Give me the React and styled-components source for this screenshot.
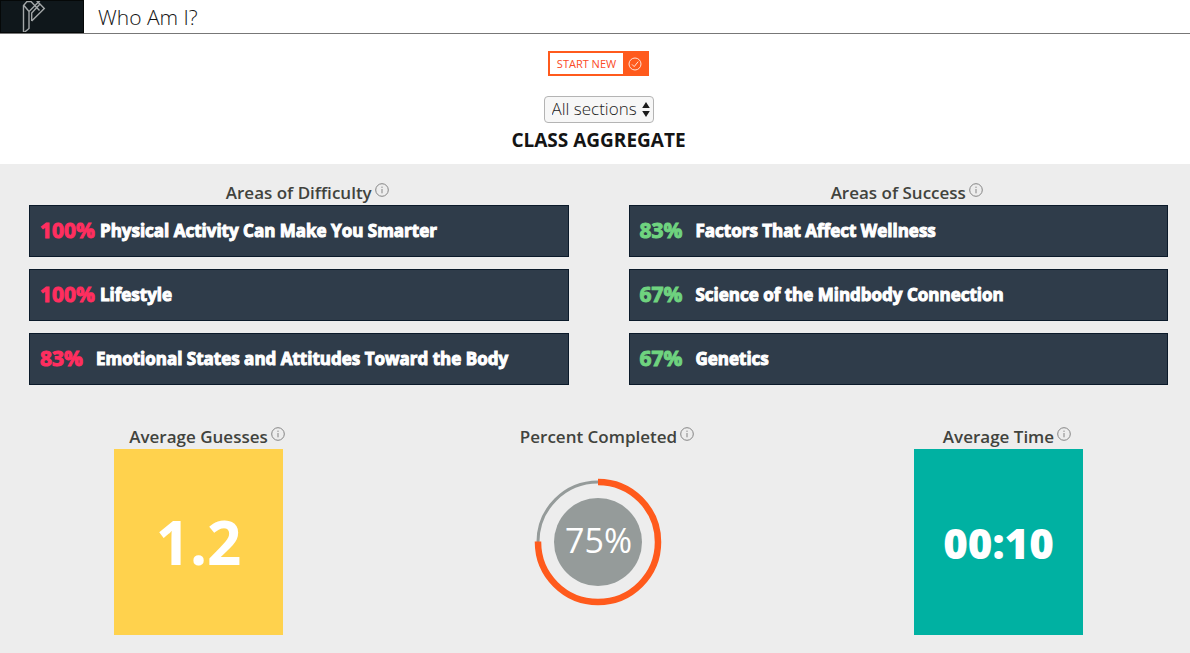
import React from 'react'
import styled, { createGlobalStyle } from 'styled-components'

const GlobalStyle = createGlobalStyle`
  * {
    box-sizing: border-box;
  }
  body {
    margin: 0;
    background: #ededed;
    color: #141414;
    font-family: 'Open Sans', 'Noto Sans', sans-serif;
  }
`

const Header = styled.header`
  display: flex;
  align-items: center;
  height: 34px;
  background: #fff;
  border-bottom: 1px solid #777;
`

const LogoLink = styled.a`
  display: block;
  width: 84px;
  height: 33px;
  margin-right: 14px;
  background: #0f171b;
  border: 1px solid #050808;
  svg {
    display: block;
  }
`

const PageTitle = styled.h1`
  margin: 0;
  font-size: 21px;
  font-weight: 300;
  line-height: 32px;
`

const Toolbar = styled.section`
  display: flex;
  flex-direction: column;
  align-items: center;
  height: 130px;
  padding: 17px 0 0 7px;
  background: #fff;
`

const StartButton = styled.button`
  display: flex;
  align-items: stretch;
  height: 25px;
  padding: 0;
  border: 2px solid #ff5a1c;
  background: #fff;
  color: #fb4a26;
  font-family: inherit;
  font-size: 11px;
  line-height: 21px;
  cursor: pointer;
`

const StartLabel = styled.span`
  padding: 0 7px;
`

const StartIcon = styled.span`
  display: flex;
  align-items: center;
  justify-content: center;
  width: 24px;
  background: #ff5a1c;
`

const SelectWrap = styled.div`
  display: grid;
  align-items: center;
  margin-top: 20px;
  svg {
    grid-area: 1 / 1;
    justify-self: end;
    margin-right: 4px;
    pointer-events: none;
  }
`

const SectionSelect = styled.select`
  grid-area: 1 / 1;
  appearance: none;
  height: 27px;
  padding: 0 15px 2px 7px;
  border: 1px solid #b4b4b4;
  border-radius: 4px;
  background: #f7f7f7;
  color: #222;
  font-family: inherit;
  font-size: 17px;
  font-weight: 300;
`

const SectionTitle = styled.h2`
  margin: 4px 0 0;
  font-size: 19px;
  font-weight: 700;
  line-height: 26px;
`

const Areas = styled.section`
  display: grid;
  grid-template-columns: 1fr 1fr;
  gap: 60px;
  padding: 16px 22px 0 29px;
`

const Column = styled.div`
  display: flex;
  flex-direction: column;
  align-items: center;
`

const Heading = styled.h3`
  display: flex;
  align-items: flex-start;
  margin: 0;
  color: #41433d;
  font-size: 17px;
  font-weight: 600;
  line-height: 25px;
  white-space: nowrap;
`

// pulled out of the width so the heading text itself stays centered
const InfoButton = styled.button`
  display: block;
  width: 14px;
  height: 14px;
  margin: 3px -17px 0 3px;
  padding: 0;
  border: 0;
  background: none;
  color: #858585;
  cursor: pointer;
  svg {
    display: block;
  }
`

const AreaList = styled.ul`
  display: flex;
  flex-direction: column;
  gap: 12px;
  width: 100%;
  margin: 0;
  padding: 0;
  list-style: none;
`

const AreaItem = styled.li`
  display: flex;
  align-items: center;
  gap: ${props => (props.$wide ? '5px' : '13px')};
  height: 52px;
  padding: 0 10px 2px;
  border: 1px solid #0b1a2a;
  background: #2f3c4a;
  color: #fff;
  font-size: 17px;
  font-weight: 700;
  -webkit-text-stroke: 1px;
`

const AreaPercent = styled.span`
  color: ${props => props.$color};
  font-size: 21px;
  line-height: 30px;
`

const Stats = styled.section`
  display: flex;
  justify-content: space-between;
  padding: 39px 107px 18px 114px;
`

const Tile = styled.div`
  display: flex;
  align-items: center;
  justify-content: center;
  width: 169px;
  height: 186px;
  background: ${props => props.$color};
  color: #fff;
  font-size: ${props => props.$size};
  font-weight: ${props => props.$weight};
`

const Gauge = styled.div`
  display: grid;
  place-items: center;
  height: 186px;
  svg,
  span {
    grid-area: 1 / 1;
  }
`

const GaugeValue = styled.span`
  padding-bottom: 4px;
  color: #fff;
  font-size: 34px;
  line-height: 40px;
`

const DIFFICULTY = [
  { percent: 100, name: 'Physical Activity Can Make You Smarter' },
  { percent: 100, name: 'Lifestyle' },
  { percent: 83, name: 'Emotional States and Attitudes Toward the Body' },
]

const SUCCESS = [
  { percent: 83, name: 'Factors That Affect Wellness' },
  { percent: 67, name: 'Science of the Mindbody Connection' },
  { percent: 67, name: 'Genetics' },
]

const Logo = () => (
  <svg width="82" height="31" viewBox="1 1 82 31" fill="none" stroke="#a3a7a8" strokeWidth="1.4">
    <path d="M23.5 33V5.5L27 1.5H31L39.5 10.5M23.5 33L29 28.5V11.5L40 0.5M24 5.5L29 11.5M31.7 21V13L39.5 4.5M31.7 21L44.3 8.5L36 0" />
  </svg>
)

const InfoHeading = ({ children }) => (
  <Heading>
    {children}
    <InfoButton type="button" aria-label={`About ${children}`}>
      <svg width="14" height="14" viewBox="0 0 14 14" fill="none" stroke="currentColor">
        <circle cx="7" cy="7" r="6.3" />
        <path d="M7 6v4.3M7 3.6v1.3" />
      </svg>
    </InfoButton>
  </Heading>
)

const AreaColumn = ({ title, areas, color }) => (
  <Column>
    <InfoHeading>{title}</InfoHeading>
    <AreaList>
      {areas.map(area => (
        <AreaItem key={area.name} $wide={area.percent === 100}>
          <AreaPercent $color={color}>{area.percent}%</AreaPercent>
          {area.name}
        </AreaItem>
      ))}
    </AreaList>
  </Column>
)

const PercentGauge = ({ value }) => {
  const length = 2 * Math.PI * 60
  return (
    <Gauge>
      <svg width="128" height="128" viewBox="0 0 128 128" fill="none">
        <circle cx="64" cy="64" r="60" stroke="#959b9a" strokeWidth="3" />
        <circle
          cx="64"
          cy="64"
          r="60"
          stroke="#ff5a1c"
          strokeWidth="6.5"
          strokeDasharray={`${(length * value) / 100} ${length}`}
          transform="rotate(-90 64 64)"
        />
        <circle cx="64" cy="64" r="44" fill="#959b9a" />
      </svg>
      <GaugeValue>{value}%</GaugeValue>
    </Gauge>
  )
}

const App = () => (
  <>
    <GlobalStyle />
    <Header>
      <LogoLink href="#" aria-label="Home">
        <Logo />
      </LogoLink>
      <PageTitle>Who Am I?</PageTitle>
    </Header>
    <main>
      <Toolbar>
        <StartButton type="button">
          <StartLabel>START NEW</StartLabel>
          <StartIcon>
            <svg width="14" height="14" viewBox="0 0 14 14" fill="none" stroke="#ffe3d6">
              <circle cx="7" cy="7" r="6" />
              <path d="M4 7.4l2.2 2.2L10.2 4.6" />
            </svg>
          </StartIcon>
        </StartButton>
        <SelectWrap>
          <SectionSelect aria-label="Section" defaultValue="all">
            <option value="all">All sections</option>
          </SectionSelect>
          <svg width="8" height="15" viewBox="0 0 8 15" fill="#1c1c1c">
            <path d="M4 0l3.8 6H.2zM4 15L.2 9h7.6z" />
          </svg>
        </SelectWrap>
        <SectionTitle>CLASS AGGREGATE</SectionTitle>
      </Toolbar>
      <Areas>
        <AreaColumn title="Areas of Difficulty" areas={DIFFICULTY} color="#ff2e5f" />
        <AreaColumn title="Areas of Success" areas={SUCCESS} color="#6fd37f" />
      </Areas>
      <Stats>
        <Column>
          <InfoHeading>Average Guesses</InfoHeading>
          <Tile $color="#ffd24d" $size="60px" $weight={700}>1.2</Tile>
        </Column>
        <Column>
          <InfoHeading>Percent Completed</InfoHeading>
          <PercentGauge value={75} />
        </Column>
        <Column>
          <InfoHeading>Average Time</InfoHeading>
          <Tile $color="#00b1a2" $size="42px" $weight={800}>00:10</Tile>
        </Column>
      </Stats>
    </main>
  </>
)

export default App
